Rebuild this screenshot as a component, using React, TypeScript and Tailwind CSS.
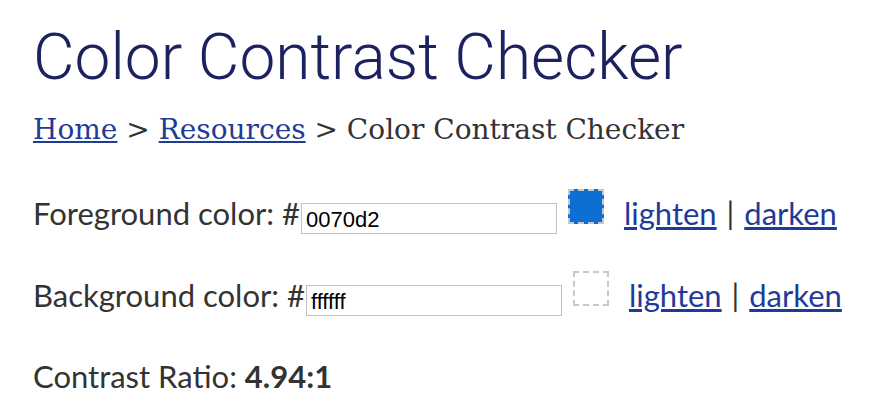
import React from 'react';

function ColorRow({
  label,
  value,
  swatch,
}: {
  label: string;
  value: string;
  swatch: string;
}) {
  return (
    <p className="text-[31px] leading-[44px] text-[#333] whitespace-nowrap">
      {label}: #
      <input
        readOnly
        value={value}
        className="ml-[1px] w-[256px] h-[31px] border border-[#c2c2c2] px-[4px] pt-[4px] text-[22px] text-black align-[-2px] font-['Liberation_Sans',Arial,sans-serif] outline-none"
      />
      <span
        className="inline-block ml-[11px] w-[36px] h-[35px] border-2 border-dashed border-[#c8c8c8] align-[1px]"
        style={{ backgroundColor: swatch }}
      />
      <a href="#" className="ml-[20px] text-[#1f3b99] underline">
        lighten
      </a>{' '}
      <span className="mx-[2px]">|</span>{' '}
      <a href="#" className="text-[#1f3b99] underline">
        darken
      </a>
    </p>
  );
}

export default function App() {
  return (
    <div className="min-h-screen bg-white px-[33px] pt-[20px] font-['Lato','Open_Sans',sans-serif]">
      <h1 className="font-['Roboto',sans-serif] font-light text-[64px] leading-[76px] text-[#1c2260]">
        Color Contrast Checker
      </h1>
      <nav className="mt-[18px] font-['DejaVu_Serif',serif] text-[28px] leading-[32px] text-[#333]">
        <a href="#" className="text-[#1f3b99] underline">Home</a> &gt;{' '}
        <a href="#" className="text-[#1f3b99] underline">Resources</a> &gt; Color Contrast Checker
      </nav>
      <div className="mt-[43px] flex flex-col gap-[36px]">
        <ColorRow label="Foreground color" value="0070d2" swatch="#0d6fd2" />
        <ColorRow label="Background color" value="ffffff" swatch="#ffffff" />
      </div>
      <p className="mt-[37px] text-[31px] leading-[44px] text-[#333]">
        Contrast Ratio: <strong className="font-bold">4.94:1</strong>
      </p>
    </div>
  );
}
